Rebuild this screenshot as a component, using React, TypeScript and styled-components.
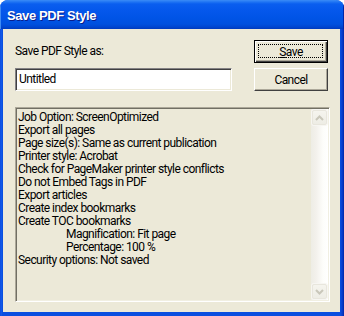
import React from "react";
import styled, { createGlobalStyle } from "styled-components";

const Global = createGlobalStyle`
  html, body { margin: 0; padding: 0; background: #ffffff; }
  body { font-family: Roboto, "Liberation Sans", Arial, sans-serif; }
`;

const Window = styled.div`
  width: 344px;
  height: 316px;
  box-sizing: border-box;
  display: flex;
  flex-direction: column;
  background: linear-gradient(90deg, #0a3fd4 0px, #1662f0 1px, #0a4fe0 2px, #0a4fe0 340px, #0a3fd0 342px, #0027a8 344px);
  border-radius: 8px 8px 0 0;
  overflow: hidden;
`;

const TitleBar = styled.div`
  height: 29px;
  flex: none;
  display: flex;
  align-items: center;
  padding-left: 7px;
  background: linear-gradient(
    180deg,
    #3b8cf6 0px,
    #1f74f3 2px,
    #0a5eef 4px,
    #0558ec 10px,
    #0054e6 18px,
    #0051df 24px,
    #0046d0 27px,
    #003bbd 29px
  );
  box-shadow: inset 1px 0 0 #3f8cf3, inset -1px 0 0 #0027a8;
`;

const Title = styled.span`
  color: #ffffff;
  font-family: "Liberation Sans", sans-serif;
  font-weight: bold;
  font-size: 13px;
  letter-spacing: -0.4px;
  text-shadow: 1px 1px 0 #0a1e8c;
  margin-top: 1px;
`;

const Client = styled.div`
  flex: 1;
  margin: 0 4px 4px 3px;
  background: #ece9d8;
  padding: 11px 10px 0 12px;
  display: flex;
  flex-direction: column;
  font-size: 12px;
  letter-spacing: -0.55px;
  color: #000000;
`;

const TopRow = styled.div`
  display: flex;
  justify-content: space-between;
`;

const LeftCol = styled.div`
  display: flex;
  flex-direction: column;
  padding-top: 5px;
`;

const Label = styled.label`
  line-height: 13px;
  height: 13px;
  margin-bottom: 10px;
`;

const Input = styled.div`
  width: 217px;
  height: 23px;
  box-sizing: border-box;
  background: #ffffff;
  border-top: 1px solid #848284;
  border-left: 1px solid #848284;
  border-right: 1px solid #ffffff;
  border-bottom: 1px solid #ffffff;
  box-shadow: inset 1px 1px 0 #404040, inset -1px -1px 0 #ece9d8;
  padding: 3px 3px 0 3px;
  line-height: 15px;
`;

const RightCol = styled.div`
  display: flex;
  flex-direction: column;
  gap: 5px;
  margin-right: 2px;
`;

const Button = styled.div<{ $default?: boolean }>`
  width: 74px;
  height: 23px;
  box-sizing: border-box;
  position: relative;
  background: #ece9d8;
  display: flex;
  align-items: center;
  justify-content: center;
  ${(p) =>
    p.$default
      ? `border: 1px solid #000000;
         box-shadow: inset 1px 1px 0 #ffffff, inset -1px -1px 0 #404040, inset -2px -2px 0 #aca899;`
      : `border-top: 1px solid #ffffff;
         border-left: 1px solid #ffffff;
         border-right: 1px solid #404040;
         border-bottom: 1px solid #404040;
         box-shadow: inset -1px -1px 0 #aca899;`}
`;

const FocusRing = styled.div`
  position: absolute;
  left: 3px;
  top: 3px;
  right: 4px;
  bottom: 4px;
  border: 1px dotted #000000;
`;

const ButtonText = styled.span`
  position: relative;
  margin-top: 1px;
  u { text-decoration: underline; text-underline-offset: 1px; }
`;

const ListBox = styled.div`
  margin-top: 16px;
  height: 195px;
  box-sizing: border-box;
  border-top: 1px solid #aca899;
  border-left: 1px solid #aca899;
  border-right: 1px solid #ffffff;
  border-bottom: 1px solid #ffffff;
  box-shadow: inset 1px 1px 0 #716f64, inset -1px -1px 0 #f1efe2;
  display: flex;
  padding: 1px 1px 1px 2px;
`;

const ListContent = styled.div`
  flex: 1;
  padding: 2px 0 0 0;
  line-height: 13px;
`;

const Line = styled.div<{ $indent?: boolean }>`
  height: 13px;
  white-space: nowrap;
  padding-left: ${(p) => (p.$indent ? "48px" : "0")};
`;

const ScrollBar = styled.div`
  width: 17px;
  display: flex;
  flex-direction: column;
  justify-content: space-between;
  background: linear-gradient(90deg, #eeede5 0%, #f3f1ec 30%, #fdfdfa 70%, #ffffff 100%);
`;

const ScrollButton = styled.div`
  width: 15px;
  height: 15px;
  margin: 1px;
  box-sizing: border-box;
  border: 1px solid #e8e6dd;
  border-radius: 2px;
  background: linear-gradient(180deg, #f5f4ee 0%, #eeede5 100%);
  box-shadow: 0 0 0 1px #f7f6f2;
  display: flex;
  align-items: center;
  justify-content: center;
`;

const Arrow = ({ down }: { down?: boolean }) => (
  <svg width="9" height="6" viewBox="0 0 9 6">
    <path
      d={down ? "M1 1 L4.5 4.5 L8 1" : "M1 5 L4.5 1.5 L8 5"}
      stroke="#c9c7ba"
      strokeWidth="2"
      fill="none"
    />
  </svg>
);

const lines: { text: string; indent?: boolean }[] = [
  { text: "Job Option: ScreenOptimized" },
  { text: "Export all pages" },
  { text: "Page size(s): Same as current publication" },
  { text: "Printer style: Acrobat" },
  { text: "Check for PageMaker printer style conflicts" },
  { text: "Do not Embed Tags in PDF" },
  { text: "Export articles" },
  { text: "Create index bookmarks" },
  { text: "Create TOC bookmarks" },
  { text: "Magnification: Fit page", indent: true },
  { text: "Percentage: 100 %", indent: true },
  { text: "Security options: Not saved" },
];

export default function App() {
  return (
    <>
      <Global />
      <Window>
        <TitleBar>
          <Title>Save PDF Style</Title>
        </TitleBar>
        <Client>
          <TopRow>
            <LeftCol>
              <Label>Save PDF Style as:</Label>
              <Input>Untitled</Input>
            </LeftCol>
            <RightCol>
              <Button $default>
                <FocusRing />
                <ButtonText>
                  <u>S</u>ave
                </ButtonText>
              </Button>
              <Button>
                <ButtonText>Cancel</ButtonText>
              </Button>
            </RightCol>
          </TopRow>
          <ListBox>
            <ListContent>
              {lines.map((l, i) => (
                <Line key={i} $indent={l.indent}>
                  {l.text}
                </Line>
              ))}
            </ListContent>
            <ScrollBar>
              <ScrollButton>
                <Arrow />
              </ScrollButton>
              <ScrollButton>
                <Arrow down />
              </ScrollButton>
            </ScrollBar>
          </ListBox>
        </Client>
      </Window>
    </>
  );
}
